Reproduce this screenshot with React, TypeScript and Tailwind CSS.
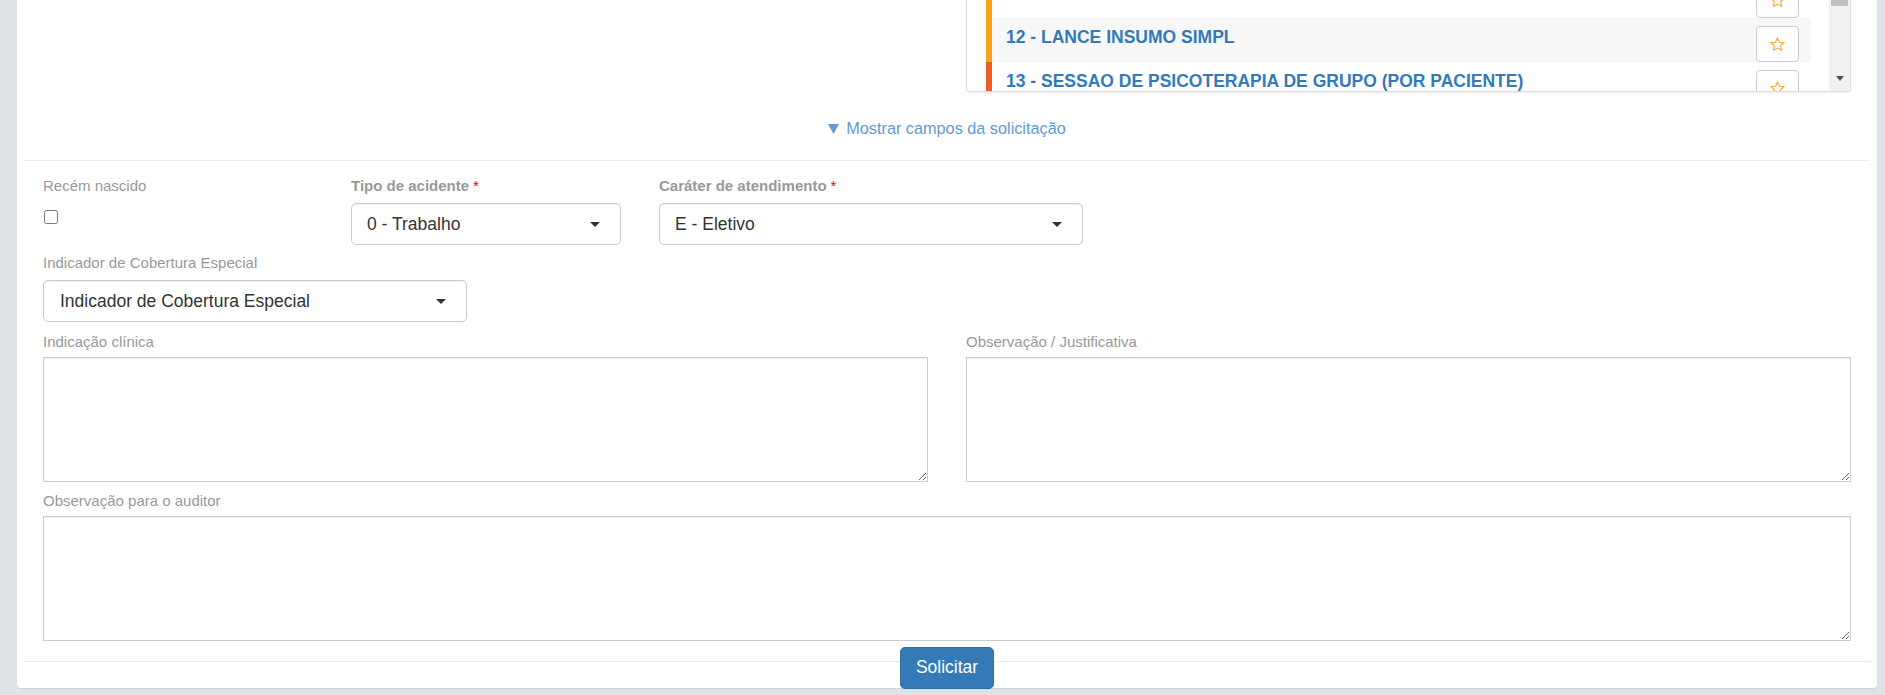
import React from "react";

const Star = () => (
  <svg width="17" height="17" viewBox="0 0 24 24" fill="none">
    <path
      d="M12 2.8l2.75 5.9 6.45.75-4.8 4.4 1.3 6.4L12 17.1l-5.7 3.15 1.3-6.4-4.8-4.4 6.45-.75z"
      stroke="#f4a636"
      strokeWidth="1.5"
      strokeLinejoin="miter"
    />
  </svg>
);

type Row = { label: string; bar: string; shaded?: boolean };

const rows: Row[] = [
  { label: "", bar: "border-[#f5a31a]" },
  { label: "12 - LANCE INSUMO SIMPL", bar: "border-[#f5a31a]", shaded: true },
  { label: "13 - SESSAO DE PSICOTERAPIA DE GRUPO (POR PACIENTE)", bar: "border-[#ef5b25]" },
];

const Caret = () => (
  <span className="w-0 h-0 border-t-[5px] border-t-[#333] border-x-[5px] border-x-transparent" />
);

const Select = ({ value, pl = "pl-[15px]" }: { value: string; pl?: string }) => (
  <div
    className={`h-[42px] w-full border border-[#ccc] rounded-[5px] bg-white shadow-[inset_0_1px_1px_rgba(0,0,0,0.075)] flex items-center justify-between ${pl} pr-[20px] text-[17.5px] text-[#333]`}
  >
    <span>{value}</span>
    <Caret />
  </div>
);

const Label = ({ children, bold, mb = "mb-[7px]" }: { children: React.ReactNode; bold?: boolean; mb?: string }) => (
  <div className={`text-[15px] leading-[21px] text-[#999] ${bold ? "font-bold" : ""} ${mb}`}>{children}</div>
);

const Req = () => <span className="text-[#ff0000] font-normal ml-[4px]">*</span>;

const TextArea = () => (
  <textarea className="block w-full h-[125px] border border-[#ccc] bg-white shadow-[inset_0_1px_1px_rgba(0,0,0,0.075)] outline-none" />
);

export default function App() {
  return (
    <div className="w-[1885px] h-[695px] bg-[#dfe3e7] overflow-hidden font-['Liberation_Sans',Arial,sans-serif]">
      <div className="ml-[17px] w-[1860px] bg-white rounded-b-[4px] shadow-[0_1px_1px_rgba(0,0,0,0.08)] px-[7px]">
        <div className="px-[19px]">
          {/* top section with list */}
          <div className="grid grid-cols-2 gap-[38px]">
            <div />
            <div className="h-[92px] border-x border-b border-[#ddd] rounded-b-[4px] shadow-[0_1px_2px_rgba(0,0,0,0.08)] flex overflow-hidden bg-white">
              <div className="flex-1 pl-[19px] pr-[18px] overflow-hidden">
                <div className="-mt-[26px]">
                  {rows.map((r, i) => (
                    <div
                      key={i}
                      className={`h-[44px] flex items-start justify-between border-l-[6px] ${r.bar} ${r.shaded ? "bg-[#f7f7f7]" : "bg-white"}`}
                    >
                      <span className="pl-[14px] pt-[7px] text-[17.5px] leading-[25px] font-bold text-[#337ab7] whitespace-nowrap">
                        {r.label}
                      </span>
                      <div className="mt-[8px] mr-[12px] w-[43px] h-[36px] border border-[#ccc] rounded-[4px] bg-white flex items-center justify-center">
                        <Star />
                      </div>
                    </div>
                  ))}
                </div>
              </div>
              <div className="w-[21px] bg-[#f1f1f1] flex flex-col items-center">
                <div className="w-[17px] h-[6px] bg-[#c1c1c1]" />
                <svg className="mt-auto mb-[10px]" width="8" height="5" viewBox="0 0 8 5">
                  <path d="M0 0h8L4 5z" fill="#505050" />
                </svg>
              </div>
            </div>
          </div>

          {/* toggle link */}
          <div className="mt-[25px] flex justify-center items-center h-[23px] text-[16.25px] leading-[23px] text-[#639ad2]">
            <svg width="11" height="10" viewBox="0 0 11 10" className="mr-[7px]">
              <path d="M0 0h11L5.5 10z" fill="#639ad2" />
            </svg>
            <span>Mostrar campos da solicitação</span>
          </div>

          <div className="mt-[20px] -mx-[19px] h-px bg-[#eee]" />

          {/* form */}
          <div className="mt-[14px]">
            <div className="flex gap-[38px]">
              <div className="w-[270px]">
                <Label>Recém nascido</Label>
                <div className="pt-[7px]">
                  <input type="checkbox" className="block m-0 ml-px w-[14px] h-[14px]" />
                </div>
              </div>
              <div className="w-[270px]">
                <Label bold>
                  Tipo de acidente<Req />
                </Label>
                <Select value="0 - Trabalho" />
              </div>
              <div className="w-[424px]">
                <Label bold>
                  Caráter de atendimento<Req />
                </Label>
                <Select value="E - Eletivo" />
              </div>
            </div>

            <div className="mt-[7px] w-[424px]">
              <Label>Indicador de Cobertura Especial</Label>
              <Select value="Indicador de Cobertura Especial" pl="pl-[16px]" />
            </div>

            <div className="mt-[9px] grid grid-cols-2 gap-[38px]">
              <div>
                <Label mb="mb-[5px]">Indicação clínica</Label>
                <TextArea />
              </div>
              <div>
                <Label mb="mb-[5px]">Observação / Justificativa</Label>
                <TextArea />
              </div>
            </div>

            <div className="mt-[8px]">
              <Label mb="mb-[5px]">Observação para o auditor</Label>
              <TextArea />
            </div>
          </div>

          {/* footer */}
          <div className="mt-[20px] -mx-[19px] h-px bg-[#e8e8e8]" />
          <div className="flex justify-center h-[26px]">
            <button className="relative -mt-[15px] w-[94px] h-[42px] bg-[#337ab7] border border-[#2e6da4] rounded-[5px] text-white text-[17.5px] leading-none">
              Solicitar
            </button>
          </div>
        </div>
      </div>
    </div>
  );
}
